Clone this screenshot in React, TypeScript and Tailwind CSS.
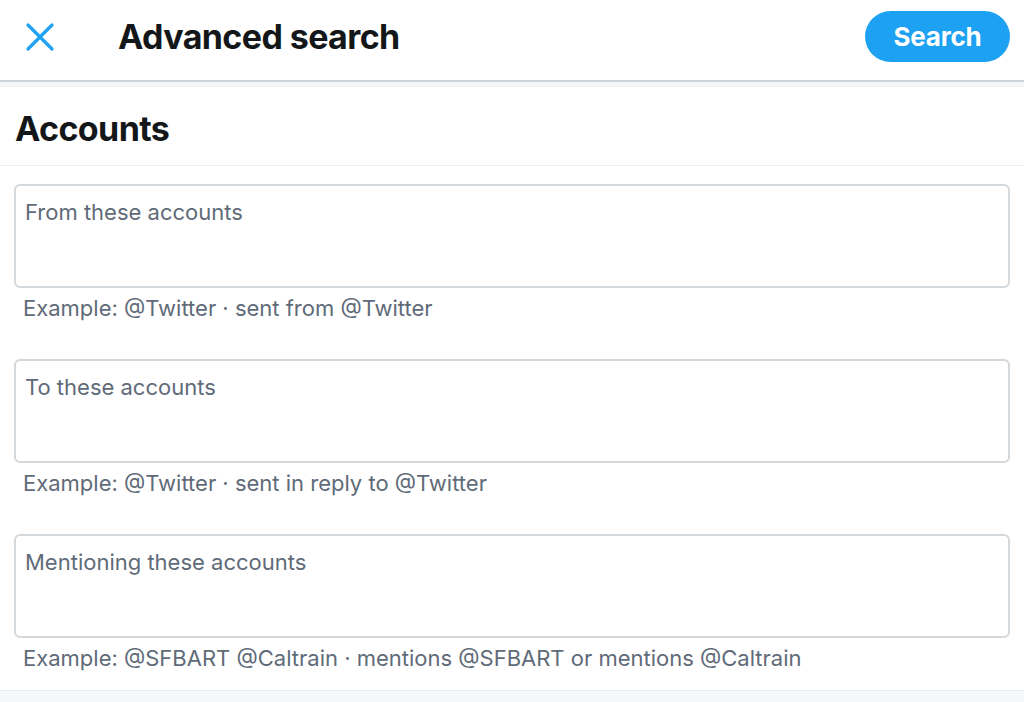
import { X } from "lucide-react";

type Field = {
  label: string;
  example: string;
};

const fields: Field[] = [
  { label: "From these accounts", example: "Example: @Twitter · sent from @Twitter" },
  { label: "To these accounts", example: "Example: @Twitter · sent in reply to @Twitter" },
  {
    label: "Mentioning these accounts",
    example: "Example: @SFBART @Caltrain · mentions @SFBART or mentions @Caltrain",
  },
];

export default function App() {
  return (
    <div
      className="w-full h-[702px] overflow-hidden bg-white flex flex-col"
      style={{ fontFamily: "Inter, 'Liberation Sans', sans-serif" }}
    >
      {/* header */}
      <div className="h-[82px] shrink-0 flex items-center pb-[7px] pl-[16px] pr-[14px] border-b-2 border-[#cdd5da]">
        <button className="w-[48px] h-[48px] flex items-center justify-center text-[#1da1f2]">
          <X size={48} strokeWidth={1.6} />
        </button>
        <h1 className="ml-[54px] text-[34px] font-bold tracking-[-0.6px] text-[#14171a]">
          Advanced search
        </h1>
        <button className="ml-auto h-[51px] w-[145px] rounded-full bg-[#1da1f2] text-white text-[26px] font-bold tracking-[-0.2px]">
          Search
        </button>
      </div>
      <div className="h-[5px] shrink-0 bg-[#f3f6f8] border-b border-[#eef1f3]" />

      {/* section title */}
      <div className="h-[79px] shrink-0 flex items-center pt-[4px] px-[15px] border-b border-[#eceff1]">
        <h2 className="text-[34px] font-bold tracking-[-0.6px] text-[#14171a]">Accounts</h2>
      </div>

      {/* fields */}
      <div className="flex flex-col gap-[37px] px-[14px] pt-[18px]">
        {fields.map((f) => (
          <div key={f.label} className="flex flex-col">
            <div className="h-[104px] rounded-[6px] border-2 border-[#d3d8dc] px-[9px] pt-[10px]">
              <span className="text-[22px] text-[#5f6b78]">{f.label}</span>
            </div>
            <p className="mt-[6px] pl-[9px] text-[22px] text-[#5f6b78] leading-[28px]">
              {f.example}
            </p>
          </div>
        ))}
      </div>

      <div className="mt-auto h-[12px] shrink-0 bg-[#f5f8fa] border-t border-[#e6ecf0]" />
    </div>
  );
}
